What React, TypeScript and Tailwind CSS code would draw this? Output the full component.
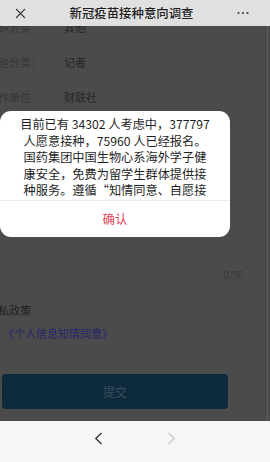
import React from "react";

function Row({ label, value }: { label: string; value: string }) {
  return (
    <div className="flex h-[35px] items-center text-[11px]">
      <div className="w-[77px] shrink-0 text-[#353535]">{label}</div>
      <div className="text-[#262626]">{value}</div>
    </div>
  );
}

export default function App() {
  return (
    <div className="flex h-[462px] w-[270px] flex-col overflow-hidden bg-white font-['Noto_Sans_CJK_SC','Noto_Sans',sans-serif]">
      {/* header */}
      <div className="flex h-[26px] shrink-0 items-center justify-between bg-[#e0e0e0] px-[14px]">
        <svg width="11" height="11" viewBox="0 0 11 11" className="ml-[1px]">
          <path d="M1 1 L10 10 M10 1 L1 10" stroke="#3a3a3a" strokeWidth="1.1" fill="none" />
        </svg>
        <div className="text-[12.4px] font-medium leading-none text-[#1e1e1e]">新冠疫苗接种意向调查</div>
        <svg width="12" height="4" viewBox="0 0 12 4" className="mr-[7px]">
          <circle cx="1.5" cy="2" r="1.1" fill="#444" />
          <circle cx="6" cy="2" r="1.1" fill="#444" />
          <circle cx="10.5" cy="2" r="1.1" fill="#444" />
        </svg>
      </div>

      {/* main dimmed area */}
      <div className="relative h-[395px] shrink-0 overflow-hidden bg-[#4b4b4b]">
        <div className="-ml-[13px] -mt-[16px] flex w-[283px] flex-col">
          <Row label="人群分类" value="其他" />
          <Row label="其他分类:" value="记者" />
          <Row label="工作单位" value="财联社" />
          <div className="h-[151px]" />
          <div className="flex h-[16px] items-center justify-end pr-[27px] leading-none text-[#373737]">
            <span className="text-[11px]">0</span>
            <span className="text-[9px]">/50</span>
          </div>
          <div className="mt-[20px] h-[16px] text-[11px] leading-[16px] text-[#202020]">隐私政策</div>
          <div className="ml-[16px] mt-[7px] h-[16px] text-[11px] leading-[16px] text-[#26266c]">《个人信息知情同意》</div>
          <div className="ml-[15px] mt-[33px] flex h-[35px] w-[226px] items-center justify-center rounded-[4px] bg-[#0e2b3e] text-[12px] text-[#3b4b5a]">
            提交
          </div>
        </div>
        <div className="absolute right-[2px] top-0 h-full w-[1px] bg-[#5e5e5e]" />

        {/* dialog */}
        <div className="absolute left-0 top-[85px] flex h-[126px] w-[230px] flex-col overflow-hidden rounded-[11px] bg-white">
          <div className="h-[89px] overflow-hidden pt-[5px] text-center text-[12.2px] leading-[16.6px] text-[#1f1f1f]">
            <div className="whitespace-nowrap">目前已有 34302 人考虑中，377797</div>
            <div className="whitespace-nowrap">人愿意接种，75960 人已经报名。</div>
            <div className="whitespace-nowrap">国药集团中国生物心系海外学子健</div>
            <div className="whitespace-nowrap">康安全，免费为留学生群体提供接</div>
            <div className="whitespace-nowrap">种服务。遵循“知情同意、自愿接</div>
            <div className="whitespace-nowrap">种”的原则，为大家提供服务。</div>
          </div>
          <div className="h-[1px] bg-[#ececec]" />
          <div className="flex flex-1 items-center justify-center text-[12.5px] text-[#e2465a]">确认</div>
        </div>
      </div>

      {/* bottom bar */}
      <div className="flex h-[41px] shrink-0 items-start justify-center gap-[64px] bg-[#f6f6f6] pt-[11px]">
        <svg width="9" height="13" viewBox="0 0 9 13">
          <path d="M7.5 1 L1.8 6.5 L7.5 12" stroke="#2e2e2e" strokeWidth="1.3" fill="none" />
        </svg>
        <svg width="9" height="13" viewBox="0 0 9 13">
          <path d="M1.5 1 L7.2 6.5 L1.5 12" stroke="#c9c9c9" strokeWidth="1.3" fill="none" />
        </svg>
      </div>
    </div>
  );
}
